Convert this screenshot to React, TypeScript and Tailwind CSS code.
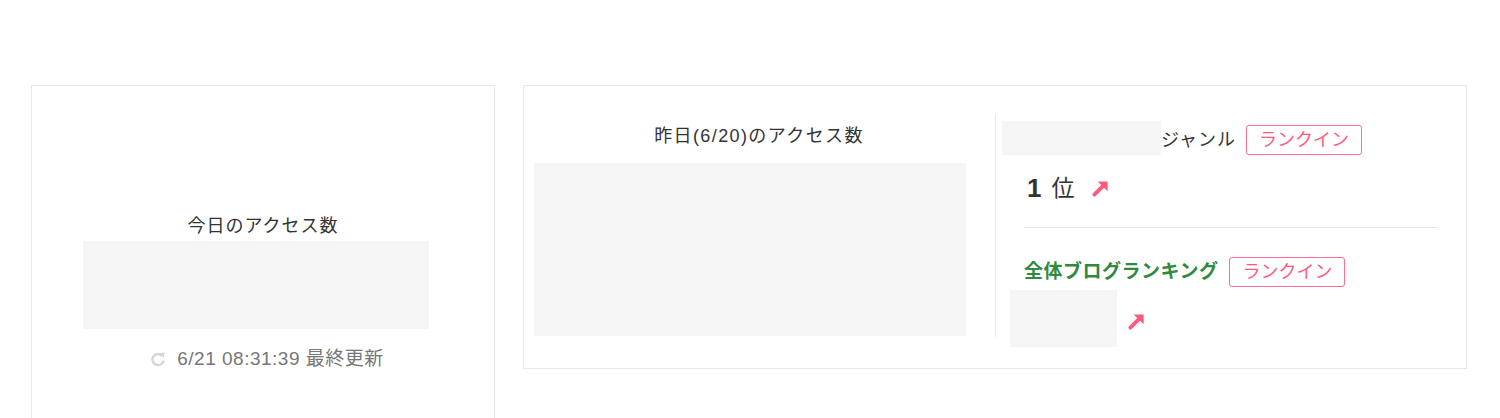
import React from 'react';

const font = { fontFamily: '"Liberation Sans", "Noto Sans CJK JP", sans-serif' };

function UpArrow({ className }: { className?: string }) {
  return (
    <svg viewBox="0 0 20 20" className={className} aria-hidden>
      <line x1="3.5" y1="16.5" x2="12" y2="8" stroke="#ff5a7d" strokeWidth="4" strokeLinecap="round" />
      <polygon points="7,2.5 17.5,2.5 17.5,13" fill="#ff5a7d" />
    </svg>
  );
}

function Refresh() {
  return (
    <svg viewBox="0 0 16 16" className="w-[16px] h-[16px]" aria-hidden>
      <path d="M12.6 5.2 A5.6 5.6 0 1 0 13.6 9.6" fill="none" stroke="#d6d6d6" strokeWidth="2.4" />
      <polygon points="9.6,2.6 14.6,1.6 13.8,6.8" fill="#d6d6d6" />
    </svg>
  );
}

function RankIn() {
  return (
    <span className="inline-flex items-center justify-center h-[30px] px-[12px] border border-[#ff6f8e] rounded-[3px] text-[18px] text-[#ff5a7d] leading-none">
      ランクイン
    </span>
  );
}

export default function App() {
  return (
    <div className="bg-white w-[1500px] h-[418px] overflow-hidden text-[#333]" style={font}>
      <div className="flex items-start gap-[28px] pl-[31px] pt-[85px]">
        {/* today */}
        <div className="w-[464px] h-[345px] border border-[#e8e8e8] flex flex-col">
          <div className="mt-[127px] text-center text-[18px] leading-[26px] tracking-[1px]">今日のアクセス数</div>
          <div className="mt-[2px] ml-[51px] w-[346px] h-[88px] bg-[#f5f5f5]" />
          <div className="mt-[18px] flex items-center justify-center gap-[11px] pl-[8px] text-[19px] text-[#777] leading-[24px] tracking-[0.5px]">
            <Refresh />
            <span>6/21 08:31:39 最終更新</span>
          </div>
        </div>

        {/* yesterday */}
        <div className="w-[944px] h-[284px] border border-[#e8e8e8] flex">
          <div className="w-[471px] pl-[10px] flex flex-col">
            <div className="mt-[37px] w-[432px] text-center text-[18px] leading-[26px] tracking-[1.4px] pl-[18px]">
              昨日(6/20)のアクセス数
            </div>
            <div className="mt-[14px] w-[432px] h-[173px] bg-[#f5f5f5]" />
          </div>
          <div className="mt-[29px] h-[222px] border-l border-[#e8e8e8]" />
          <div className="flex-1 flex flex-col pl-[6px]">
            <div className="mt-[34px] flex items-center">
              <div className="w-[159px] h-[34px] bg-[#f5f5f5]" />
              <span className="text-[18px] leading-[26px] mt-[4px] tracking-[1px]">ジャンル</span>
              <span className="ml-[10px] mt-[5px]">
                <RankIn />
              </span>
            </div>
            <div className="mt-[16px] ml-[25px] flex items-center">
              <span className="text-[26px] font-bold leading-[34px]">1</span>
              <span className="ml-[10px] text-[23px] leading-[34px]">位</span>
              <UpArrow className="ml-[17px] w-[19px] h-[19px] mt-[1px]" />
            </div>
            <div className="mt-[22px] ml-[22px] w-[414px] border-t border-[#e6e6e6]" />
            <div className="mt-[29px] ml-[22px] flex items-center">
              <span className="text-[19px] font-bold text-[#2f8a3f] leading-[26px] tracking-[0.5px]">全体ブログランキング</span>
              <span className="ml-[11px]">
                <RankIn />
              </span>
            </div>
            <div className="mt-[3px] ml-[8px] flex items-center">
              <div className="w-[107px] h-[57px] bg-[#f5f5f5]" />
              <UpArrow className="ml-[10px] w-[19px] h-[19px] mt-[5px]" />
            </div>
          </div>
        </div>
      </div>
    </div>
  );
}
